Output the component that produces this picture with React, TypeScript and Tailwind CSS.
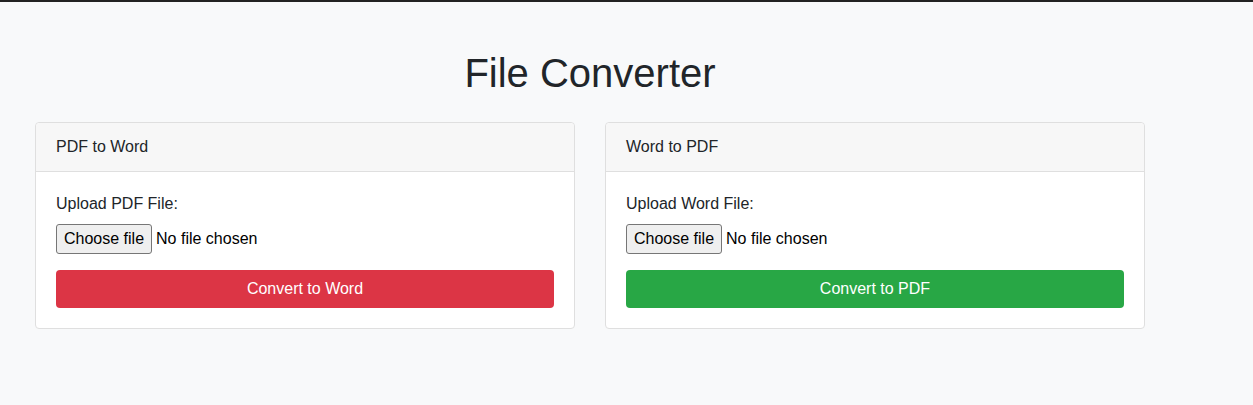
const FileField = ({ id, label }: { id: string; label: string }) => {
  return (
    <div className="mb-4">
      <label htmlFor={id} className="block mb-2 leading-6">
        {label}
      </label>
      <label htmlFor={id} className="flex items-center h-[30px] cursor-pointer">
        <input id={id} type="file" className="hidden" />
        <span className="h-[30px] flex items-center px-[7px] border border-[#767676] rounded-[3px] bg-[#efefef] text-black">
          Choose file
        </span>
        <span className="ml-[4px] text-black">No file chosen</span>
      </label>
    </div>
  );
};

const ConverterCard = ({
  title,
  id,
  label,
  action,
  btnClass,
}: {
  title: string;
  id: string;
  label: string;
  action: string;
  btnClass: string;
}) => {
  return (
    <div className="border border-[#dfdfdf] rounded-[4px] bg-white">
      <div className="px-5 py-3 leading-6 bg-[#f7f7f7] border-b border-[#dfdfdf] rounded-t-[4px]">
        {title}
      </div>
      <div className="p-5">
        <FileField id={id} label={label} />
        <button
          className={`w-full h-[38px] rounded-[4px] text-white leading-6 ${btnClass}`}
        >
          {action}
        </button>
      </div>
    </div>
  );
};

export default function App() {
  return (
    <div
      className="min-h-[405px] bg-[#f8f9fa] text-[#212529] text-base"
      style={{ fontFamily: '"Liberation Sans", Arial, sans-serif' }}
    >
      <div className="h-[2px] bg-[#222222]" />
      <div className="w-[1140px] ml-[20px] px-[15px] pt-[47px]">
        <h1 className="text-center text-[40px] leading-[48px] font-medium mb-[25px]">
          File Converter
        </h1>
        <div className="grid grid-cols-2 gap-[30px]">
          <ConverterCard
            title="PDF to Word"
            id="pdfFile"
            label="Upload PDF File:"
            action="Convert to Word"
            btnClass="bg-[#dc3545]"
          />
          <ConverterCard
            title="Word to PDF"
            id="wordFile"
            label="Upload Word File:"
            action="Convert to PDF"
            btnClass="bg-[#28a745]"
          />
        </div>
      </div>
    </div>
  );
}
